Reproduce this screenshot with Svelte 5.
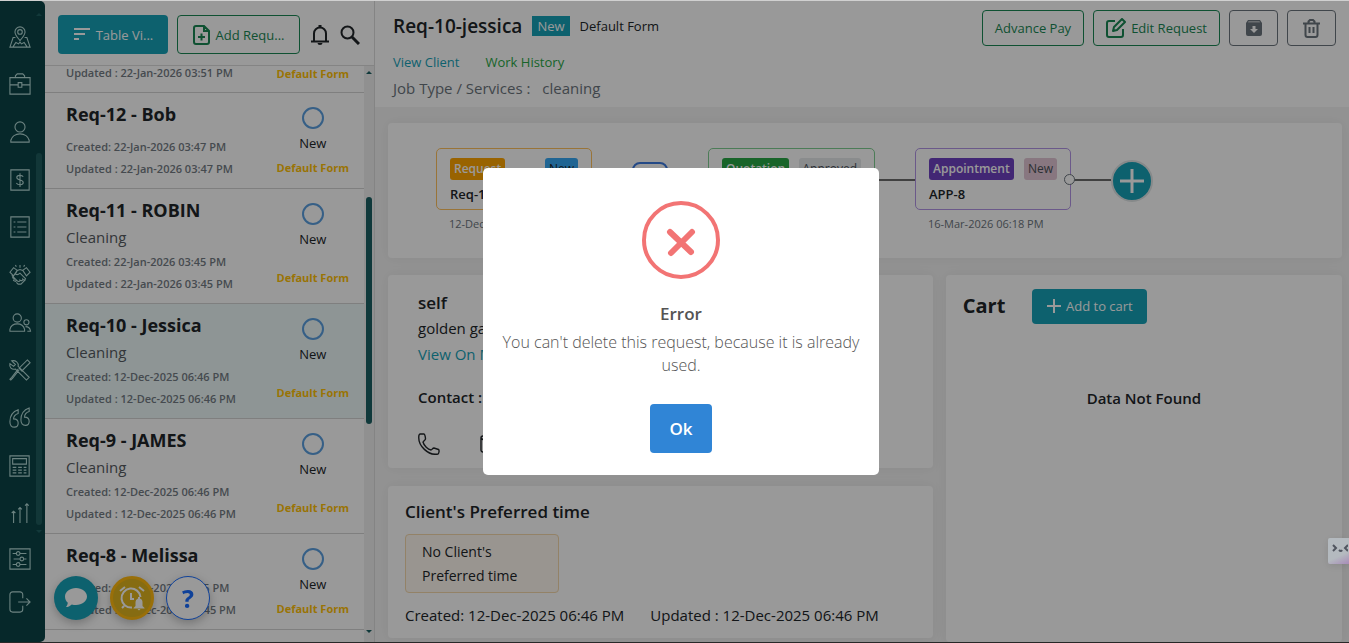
<script>
    let showError = true;

    // 24x24 outline icons for the side menu
    const menu = [
        { label: 'Map', d: 'M12 16C9 12 6.500 9.500 6.500 6.500a5.500 5.500 0 0 1 11 0C17.500 9.500 15 12 12 16zM12 9a2.500 2.500 0 1 0 0-5 2.500 2.500 0 0 0 0 5zM7 12.500H4.500L1 23h22l-3.500-10.500H17M4.500 22.500l3-4.500 3 1.500 1.500-2 1.500 2 3-1.500 3 4.500' },
        { label: 'Jobs', d: 'M1 5h22v18H1zM7 5V3l2-2h6l2 2v2M1 13h9M14 13h9M10 10.500h4v5h-4z' },
        { label: 'Clients', d: 'M12 12a5.500 5.500 0 1 0 0-11 5.500 5.500 0 0 0 0 11zM2 23v-2c1-4 5-7 10-7s9 3 10 7v2z' },
        { label: 'Payments', d: 'M2 1h20v22H2zM15.500 8.500c-1-2-7-2.500-7 .8 0 3.700 7 1.700 7 5.500 0 3.200-6 3-7.500.4M12 4.500v15' },
        { label: 'Requests', d: 'M2 1h20v22H2zM5 6.500h2M9 6.500h10M5 12h2M9 12h10M5 17.500h2M9 17.500h10' },
        { label: 'Deals', d: 'M1 9l4-5 4 3-4 6zM23 9l-4-5-4 3 4 6zM9 7l3-1 3 1M9 7l-2 4c2 1.500 4 0 5-1l6 6c-1 2-2 1.500-3 .5 0 2-2 2-3 1 0 2-2 2-3 1l-6-6M5 13l-1 2 2 1-1 2 2 1 1-1M8 20l2 2h3l5-5M12 4V1M8 3L7 1M16 3l1-2' },
        { label: 'Team', d: 'M9 11a4.500 4.500 0 1 0 0-9 4.500 4.500 0 0 0 0 9zM1 21v-2c1-4 4-6 8-6s7 2 8 6v2zM19 14a2.800 2.800 0 1 0 0-5.600 2.800 2.800 0 0 0 0 5.600zM18 16c3 0 5 1.500 5.500 5H20' },
        { label: 'Services', d: 'M20 1l3 3-9 9-3-3zM11 12L4 21l-2 2-1-1 2-2 7-9M3 2l4 4-2 2-4-3c-1 4 2 7 6 6l12 12 3-3L10 8c1-4-3-7-7-6z' },
        { label: 'Quotes', d: 'M10 3C4 5 1 9 1 16c0 4 2 6 5 6s4-2 4-4.500S8 13 5 13c0-3 2-5 5-6zM22 1c-6 2-9 6-9 13 0 4 2 6 5 6s4-2 4-4.500S20 11 17 11c0-3 2-5 5-6z' },
        { label: 'Invoices', d: 'M1 1h21v22H1zM4 4h15v6H4zM4 13.500h4M10 13.500h4M16 13.500h3M4 16.500h4M10 16.500h4M16 16.500h3M4 19.500h4M10 19.500h4M16 19.500h3' },
        { label: 'Reports', d: 'M5 23V10M3 12l2-2 2 2M12 23V6M10 8l2-2 2 2M19.500 23V2M17.500 4l2-2 2 2' }
    ];
    const bottomMenu = [
        { label: 'Settings', d: 'M1 1h22v22H1zM4 6h4M12 6h7M10 8a2 2 0 1 0 0-4 2 2 0 0 0 0 4zM5 12h7M16 12h3M14 14a2 2 0 1 0 0-4 2 2 0 0 0 0 4zM4 18h4M12 18h7M10 20a2 2 0 1 0 0-4 2 2 0 0 0 0 4z' },
        { label: 'Log out', d: 'M15 8V4a3 3 0 0 0-3-3H4a3 3 0 0 0-3 3v16a3 3 0 0 0 3 3h8a3 3 0 0 0 3-3v-4M10 12h13M19 8l4 4-4 4' }
    ];

    const requests = [
        { title: 'Req-12 - Bob', service: '', created: '22-Jan-2026 03:47 PM', updated: '22-Jan-2026 03:47 PM' },
        { title: 'Req-11 - ROBIN', service: 'Cleaning', created: '22-Jan-2026 03:45 PM', updated: '22-Jan-2026 03:45 PM' },
        { title: 'Req-10 - Jessica', service: 'Cleaning', created: '12-Dec-2025 06:46 PM', updated: '12-Dec-2025 06:46 PM', active: true },
        { title: 'Req-9 - JAMES', service: 'Cleaning', created: '12-Dec-2025 06:46 PM', updated: '12-Dec-2025 06:46 PM' },
        { title: 'Req-8 - Melissa', service: '', created: '12-Dec-2025 06:45 PM', updated: '12-Dec-2025 06:45 PM' }
    ];
</script>

<div class="app">
    <nav class="sidebar">
        <div class="menu-scroll">
            <div class="menu">
                {#each menu as item}
                    <a href="#menu" aria-label={item.label}><svg viewBox="0 0 24 24"><path d={item.d} /></svg></a>
                {/each}
            </div>
            <div class="menu-bar">
                <i class="tri up"></i>
                <i class="menu-thumb"></i>
                <i class="tri down"></i>
            </div>
        </div>
        <div class="menu bottom">
            {#each bottomMenu as item}
                <a href="#menu" aria-label={item.label}><svg viewBox="0 0 24 24"><path d={item.d} /></svg></a>
            {/each}
        </div>
    </nav>

    <aside class="panel">
        <div class="tools">
            <button class="btn teal table-view">
                <svg width="18" height="18" viewBox="0 0 18 18"><path d="M1 3h16M1 8h11M1 13h5" stroke="currentColor" stroke-width="2" /></svg>
                <span>Table Vi...</span>
            </button>
            <button class="btn green add-request">
                <svg width="18" height="20" viewBox="0 0 18 20" fill="none" stroke="currentColor" stroke-width="2"><path d="M3 1h8l5 5v11a2 2 0 0 1-2 2H3a2 2 0 0 1-2-2V3a2 2 0 0 1 2-2zM11 1v5h5M8.500 8.500v7M5 12h7" /></svg>
                <span>Add Requ...</span>
            </button>
            <div class="tool-icons">
                <button class="plain" aria-label="Notifications">
                    <svg width="20" height="22" viewBox="0 0 20 22"><path d="M4 17V9.500a6 6 0 0 1 12 0V17M1 17.500h18" fill="none" stroke="currentColor" stroke-width="2" /><path d="M8.500 1h3v3h-3zM7.500 19h5a2.500 2 0 0 1-5 0z" fill="currentColor" /></svg>
                </button>
                <button class="plain" aria-label="Search">
                    <svg width="20" height="20" viewBox="0 0 20 20" fill="none" stroke="currentColor"><circle cx="7.500" cy="7.500" r="6" stroke-width="2" /><path d="M12 12l7 7" stroke-width="3" /></svg>
                </button>
            </div>
        </div>

        <div class="list-wrap">
            <div class="list">
                <div class="row cut">
                    <p class="date">Updated : 22-Jan-2026 03:51 PM</p>
                    <span class="form">Default Form</span>
                </div>
                {#each requests as r}
                    <div class="row" class:active={r.active} class:short={!r.service}>
                        <div class="info">
                            <h2>{r.title}</h2>
                            {#if r.service}<p class="service">{r.service}</p>{/if}
                            <div class="dates">
                                <p class="date">Created: {r.created}</p>
                                <p class="date">Updated : {r.updated}</p>
                            </div>
                        </div>
                        <div class="state">
                            <i class="ring"></i>
                            <span class="status">New</span>
                            <span class="form">Default Form</span>
                        </div>
                    </div>
                {/each}
            </div>
            <div class="list-bar">
                <i class="tri up"></i>
                <i class="list-thumb"></i>
                <i class="tri down"></i>
            </div>
        </div>
    </aside>

    <main>
        <header>
            <div class="heading">
                <div class="title-line">
                    <h1>Req-10-jessica</h1>
                    <span class="badge-new">New</span>
                    <span class="small-text">Default Form</span>
                </div>
                <div class="links">
                    <a class="link-teal" href="#client">View Client</a>
                    <a class="link-green" href="#history">Work History</a>
                </div>
                <p class="job">Job Type / Services : <span>cleaning</span></p>
            </div>
            <div class="actions">
                <button class="btn green">Advance Pay</button>
                <button class="btn green">
                    <svg width="20" height="20" viewBox="0 0 20 20" fill="none" stroke="currentColor" stroke-width="2"><path d="M9 3H3a2 2 0 0 0-2 2v12a2 2 0 0 0 2 2h12a2 2 0 0 0 2-2v-6M7 13l1-4 8-8 3 3-8 8z" stroke-linejoin="round" /></svg>
                    <span>Edit Request</span>
                </button>
                <button class="btn gray" aria-label="Archive">
                    <svg width="16" height="16" viewBox="0 0 16 16"><path fill="currentColor" fill-rule="evenodd" d="M2 0h12l2 3v11a2 2 0 0 1-2 2H2a2 2 0 0 1-2-2V3zM2.500 1.500h11l.5.8H2zM6.500 6v3H4l4 4 4-4H9.500V6z" /></svg>
                </button>
                <button class="btn gray" aria-label="Delete">
                    <svg width="17" height="19" viewBox="0 0 17 19" fill="none" stroke="currentColor" stroke-width="2"><path d="M0 4.500h17M2.500 4.500V16a2 2 0 0 0 2 2h8a2 2 0 0 0 2-2V4.500M5.500 4V2.500L7 1h3l1.500 1.500V4M6.500 8v6M10.500 8v6" /></svg>
                </button>
            </div>
        </header>

        <div class="content">
            <section class="card flow">
                <div class="step">
                    <div class="node request">
                        <div class="tags"><b>Request</b><span>New</span></div>
                        <strong>Req-10</strong>
                        <i class="port"></i>
                    </div>
                    <p>12-Dec-2025 06:46 PM</p>
                </div>
                <i class="line"></i>
                <i class="blue-box"></i>
                <i class="line"></i>
                <div class="step wide">
                    <div class="node quotation">
                        <div class="tags"><b>Quotation</b><span>Approved</span></div>
                        <i class="port"></i>
                    </div>
                </div>
                <i class="line"></i>
                <div class="step">
                    <div class="node appointment">
                        <div class="tags"><b>Appointment</b><span>New</span></div>
                        <strong>APP-8</strong>
                        <i class="port"></i>
                    </div>
                    <p>16-Mar-2026 06:18 PM</p>
                </div>
                <i class="line"></i>
                <button class="plus" aria-label="Add step">
                    <svg width="24" height="24" viewBox="0 0 24 24"><path d="M12 0v24M0 12h24" stroke="currentColor" stroke-width="3" /></svg>
                </button>
            </section>

            <div class="columns">
                <div class="left">
                    <section class="card contact">
                        <h3>self</h3>
                        <p>golden gate</p>
                        <a class="link-teal" href="#map">View On Map</a>
                        <h4>Contact :</h4>
                        <div class="contact-icons">
                            <svg width="22" height="22" viewBox="0 0 22 22"><path d="M2 1h4c1 0 1.500 4 1.500 5S5 8.500 5 9c1 4 5 7.500 8 8 1 0 1.500-2 3-2l4.500 1.500c1 .5.500 4-.5 4.500C11 23-1 13 1 2z" /></svg>
                            <svg width="22" height="22" viewBox="0 0 22 22"><path d="M3 3h16a2 2 0 0 1 2 2v12a2 2 0 0 1-2 2H3a2 2 0 0 1-2-2V5a2 2 0 0 1 2-2zM1 5l10 8L21 5" /></svg>
                        </div>
                    </section>
                    <section class="card time">
                        <h3>Client's Preferred time</h3>
                        <div class="notice">No Client's Preferred time</div>
                        <div class="stamps">
                            <span>Created: 12-Dec-2025 06:46 PM</span>
                            <span>Updated : 12-Dec-2025 06:46 PM</span>
                        </div>
                    </section>
                </div>
                <section class="card cart">
                    <div class="cart-head">
                        <h2>Cart</h2>
                        <button class="btn teal add-cart">
                            <svg width="14" height="14" viewBox="0 0 14 14"><path d="M7 0v14M0 7h14" stroke="currentColor" stroke-width="2" /></svg>
                            <span>Add to cart</span>
                        </button>
                    </div>
                    <p>Data Not Found</p>
                </section>
            </div>
        </div>
    </main>
</div>

<div class="floating">
    <button class="fab chat" aria-label="Chat">
        <svg width="24" height="22" viewBox="0 0 24 22"><path fill="#fff" d="M12 1c6 0 11 3.700 11 8.500S18 18 12 18c-1.500 0-3-.2-4.200-.6C6 19 4 20 2 20c1-1.200 1.700-2.700 1.800-4.200C2 14.200 1 12 1 9.500 1 4.700 6 1 12 1z" /></svg>
    </button>
    <button class="fab alarm" aria-label="Reminders">
        <svg width="26" height="26" viewBox="0 0 26 26" fill="none" stroke="#fff" stroke-width="2"><path d="M13 22.500A9.500 9.500 0 1 1 21.500 12M12 8v6h3M1 6l5-4M25 6l-5-4M3 23l2-2" /><path fill="#fff" stroke="none" d="M19 12h2v1.500c2 .7 2.500 2 2.500 4V21l2 2v.6h-11V23l2-2v-3.500c0-2 .8-3.300 2.500-4zM18.500 24h3l-1.500 1.500z" /></svg>
    </button>
    <button class="fab help" aria-label="Help">?</button>
</div>

{#if showError}
    <div class="backdrop">
        <div class="modal" role="alertdialog" aria-labelledby="error-title">
            <svg class="error-icon" width="78" height="78" viewBox="0 0 78 78"><circle cx="39" cy="39" r="37" /><path d="M28 31l21 20M50 31L29 52" /></svg>
            <h2 id="error-title">Error</h2>
            <p>You can't delete this request, because it is already used.</p>
            <button on:click={() => (showError = false)}>Ok</button>
        </div>
    </div>
{/if}

<button class="helper" aria-label="Assistant">
    <svg width="20" height="12" viewBox="0 0 20 12" fill="none" stroke="#50555f" stroke-width="2"><path d="M5 3l3 3-3 3M11 8q2 2 3 0M20 3l-3 3 3 3" /></svg>
</button>

<style>
    :global(body) {
        background: #f4f4f4;
        font-family: 'Open Sans', 'Noto Sans', sans-serif;
        color: #212529;
        overflow: hidden;
    }

    .app, .app *, .backdrop *, .floating *, .helper {
        box-sizing: border-box;
    }

    h1, h2, h3, h4, p {
        margin: 0;
    }

    button {
        font-family: inherit;
        padding: 0;
        cursor: pointer;
    }

    a {
        text-decoration: none;
    }

    svg {
        flex: none;
        display: block;
    }

    .app {
        display: flex;
        height: 100vh;
        background: #fff;
        border-top: 1px solid #d0d0d0;
        border-bottom: 1px solid #444;
    }

    /* side menu */
    .sidebar {
        width: 45px;
        flex: none;
        display: flex;
        flex-direction: column;
        background: #0a4346;
        border-radius: 0 5px 5px 0;
    }

    .menu-scroll {
        display: flex;
        height: 536px;
        padding-top: 12px;
    }

    .menu {
        width: 36px;
        display: flex;
        flex-direction: column;
    }

    .menu a {
        flex: 1;
        display: flex;
        align-items: center;
        justify-content: flex-end;
        padding-right: 5px;
    }

    .menu.bottom a {
        flex: none;
        height: 43px;
    }

    .menu svg {
        width: 22px;
        height: 22px;
        fill: none;
        stroke: #b5dad7;
        stroke-width: 1.2;
        overflow: visible;
    }

    .menu-bar, .list-bar {
        display: flex;
        flex-direction: column;
        align-items: center;
    }

    .menu-bar {
        width: 6px;
        padding-bottom: 4px;
        color: #1f6062;
    }

    .menu-thumb {
        flex: 1;
        width: 6px;
        margin: 137px 0 5px;
        border-radius: 3px;
        background: #1f5c5e;
    }

    .tri {
        border: 3px solid transparent;
    }

    .tri.up {
        border-top: 0;
        border-bottom-color: currentColor;
    }

    .tri.down {
        border-bottom: 0;
        border-top-color: currentColor;
    }

    /* request list */
    .panel {
        width: 330px;
        flex: none;
        display: flex;
        flex-direction: column;
        border-right: 1px solid #ddd;
    }

    .tools {
        height: 65px;
        flex: none;
        display: flex;
        align-items: center;
        gap: 9px;
        padding: 3px 13px 0;
        border-bottom: 1px solid #ddd;
    }

    .tool-icons {
        flex: 1;
        display: flex;
        align-items: center;
        justify-content: center;
        gap: 10px;
    }

    .btn {
        display: flex;
        align-items: center;
        justify-content: center;
        gap: 5px;
        border-radius: 4px;
        font-size: 13px;
        white-space: nowrap;
    }

    .teal {
        border: 0;
        background: #17a2b8;
        color: #fff;
    }

    .green {
        border: 1px solid #198754;
        background: #fff;
        color: #198754;
    }

    .gray {
        border: 1px solid #6c757d;
        background: #fff;
        color: #6c757d;
    }

    .table-view {
        width: 110px;
        height: 39px;
    }

    .add-request {
        width: 123px;
        height: 39px;
    }

    .plain {
        border: 0;
        background: none;
        color: #212529;
        width: 20px;
    }

    .list-wrap {
        flex: 1;
        min-height: 0;
        display: flex;
    }

    .list {
        flex: 1;
        overflow: hidden;
    }

    .row {
        display: flex;
        justify-content: space-between;
        padding: 8px 15px 8px 21px;
        border-bottom: 1px solid #d4d4d4;
    }

    .row.active {
        background: #edf9f9;
    }

    .row.cut {
        padding-top: 0;
        height: 27px;
        align-items: flex-end;
    }

    .row h2 {
        font-size: 18px;
        line-height: 27px;
        font-weight: 700;
    }

    .service {
        font-size: 15px;
        line-height: 26px;
        color: #555b61;
    }

    .dates {
        padding-top: 1px;
    }

    .short .dates {
        padding-top: 8px;
    }

    .date {
        font-size: 11px;
        line-height: 22px;
        font-weight: 600;
        color: #747c84;
        white-space: nowrap;
    }

    .state {
        display: flex;
        flex-direction: column;
        align-items: center;
        padding-top: 6px;
    }

    .ring {
        width: 22px;
        height: 22px;
        border: 2px solid #5b9fe0;
        border-radius: 50%;
    }

    .status {
        margin-top: 4px;
        font-size: 13px;
        line-height: 20px;
    }

    .form {
        font-size: 11px;
        line-height: 20px;
        font-weight: 700;
        color: #ffc107;
    }

    .state .form {
        margin-top: 19px;
    }

    .short .state .form {
        margin-top: 5px;
    }

    .list-bar {
        width: 10px;
        padding: 5px 0 9px;
        background: #f1f1f1;
        color: #1b6063;
    }

    .list-thumb {
        width: 6px;
        height: 227px;
        margin: 123px 0 auto;
        border-radius: 3px;
        background: #1b6063;
    }

    /* request details */
    main {
        flex: 1;
        min-width: 0;
        display: flex;
        flex-direction: column;
        background: #f4f4f4;
    }

    header {
        height: 106px;
        flex: none;
        display: flex;
        justify-content: space-between;
        padding: 9px 13px 0 18px;
        background: #fff;
    }

    .title-line {
        display: flex;
        align-items: center;
        gap: 10px;
        height: 32px;
    }

    h1 {
        font-size: 19px;
        font-weight: 600;
    }

    .badge-new {
        height: 20px;
        padding: 0 5px;
        background: #17a2b8;
        color: #fff;
        font-size: 13px;
        line-height: 20px;
    }

    .small-text {
        font-size: 13px;
    }

    .links {
        display: flex;
        gap: 26px;
        margin-top: 10px;
        font-size: 13px;
        line-height: 20px;
    }

    .link-teal {
        color: #17a2b8;
    }

    .link-green {
        color: #28a745;
    }

    .job {
        margin-top: 4px;
        font-size: 15px;
        line-height: 24px;
        color: #6c757d;
    }

    .job span {
        margin-left: 8px;
    }

    .actions {
        display: flex;
        align-items: flex-start;
        gap: 9px;
    }

    .actions .btn {
        height: 36px;
        padding: 0 12px;
    }

    .actions .gray {
        width: 49px;
    }

    .content {
        flex: 1;
        min-height: 0;
        display: flex;
        flex-direction: column;
        gap: 17px;
        padding: 16px 7px 0 13px;
    }

    .card {
        background: #fff;
        border-radius: 4px;
        box-shadow: 0 0 14px rgba(0, 0, 0, 0.05);
    }

    .flow {
        height: 135px;
        flex: none;
        display: flex;
        align-items: flex-start;
        padding: 25px 48px;
    }

    .step {
        width: 156px;
        flex: none;
    }

    .step.wide {
        width: 167px;
    }

    .step p {
        padding-left: 13px;
        font-size: 11px;
        line-height: 28px;
        color: #6c757d;
    }

    .node {
        position: relative;
        height: 62px;
        padding: 9px 13px 0;
        border: 1px solid;
        border-radius: 5px;
    }

    .tags {
        display: flex;
        justify-content: space-between;
        font-size: 12px;
        line-height: 22px;
    }

    .tags b, .tags span {
        padding: 0 4px;
        border-radius: 3px;
    }

    .tags b {
        color: #fff;
        font-weight: 600;
    }

    .node strong {
        display: block;
        font-size: 13px;
        line-height: 28px;
        font-weight: 600;
    }

    .request {
        border-color: #ffc15e;
    }

    .request b {
        background: #ffa500;
    }

    .request span {
        background: #36a9f5;
    }

    .quotation {
        border-color: #7fcf92;
    }

    .quotation b {
        background: #28a745;
    }

    .quotation span {
        background: #e6e9ec;
        color: #495057;
    }

    .appointment {
        border-color: #b295e6;
    }

    .appointment b {
        background: #6f42c1;
    }

    .appointment span {
        background: #e3c7d5;
        color: #495057;
    }

    .port {
        position: absolute;
        right: -5px;
        top: 25px;
        width: 11px;
        height: 11px;
        border: 1px solid #6c757d;
        border-radius: 50%;
        background: #fff;
    }

    .line {
        width: 40px;
        height: 2px;
        flex: none;
        margin-top: 31px;
        background: #6c6c6c;
    }

    .blue-box {
        width: 36px;
        height: 36px;
        margin-top: 14px;
        border: 2px solid #3d7be0;
        border-radius: 8px;
    }

    .plus {
        display: flex;
        align-items: center;
        justify-content: center;
        width: 42px;
        height: 42px;
        margin-top: 12px;
        border: 2px solid #dfe5e6;
        border-radius: 50%;
        background: #17a2b8;
        color: #fff;
    }

    .columns {
        flex: 1;
        min-height: 0;
        display: grid;
        grid-template-columns: 11fr 8fr;
        gap: 13px;
    }

    .left {
        display: flex;
        flex-direction: column;
        gap: 18px;
        padding-bottom: 4px;
    }

    .contact {
        display: flex;
        flex-direction: column;
        align-items: flex-start;
        height: 193px;
        padding: 16px 30px 0;
        font-size: 15px;
        line-height: 24px;
    }

    .contact h3 {
        font-size: 17px;
        font-weight: 600;
    }

    .contact p, .contact .link-teal {
        line-height: 26px;
    }

    .contact h4 {
        margin-top: 18px;
        font-size: 15px;
        font-weight: 600;
    }

    .contact-icons {
        display: flex;
        gap: 40px;
        margin-top: 24px;
    }

    .contact-icons svg {
        fill: none;
        stroke: #212529;
        stroke-width: 1.4;
    }

    .time {
        flex: 1;
        padding: 14px 17px 0;
    }

    .time h3 {
        font-size: 17px;
        line-height: 24px;
        font-weight: 600;
    }

    .notice {
        width: 154px;
        margin-top: 10px;
        padding: 5px 16px 4px;
        border: 1px solid #f5d9ac;
        border-radius: 4px;
        background: #fff8f0;
        font-size: 14px;
        line-height: 24px;
    }

    .stamps {
        display: flex;
        gap: 26px;
        margin-top: 10px;
        font-size: 15px;
        line-height: 24px;
    }

    .cart {
        padding: 13px 17px;
    }

    .cart-head {
        display: flex;
        align-items: center;
        gap: 27px;
    }

    .cart h2 {
        font-size: 20px;
        line-height: 36px;
        font-weight: 700;
    }

    .add-cart {
        width: 115px;
        height: 35px;
    }

    .cart p {
        margin-top: 62px;
        text-align: center;
        font-size: 15px;
        line-height: 24px;
        font-weight: 600;
    }

    /* overlays */
    .floating {
        position: fixed;
        left: 54px;
        bottom: 23px;
        display: flex;
        gap: 12px;
    }

    .fab {
        display: flex;
        align-items: center;
        justify-content: center;
        width: 44px;
        height: 44px;
        border: 0;
        border-radius: 50%;
        box-shadow: 0 3px 10px rgba(0, 0, 0, 0.25);
    }

    .chat {
        background: #17a2b8;
    }

    .alarm {
        border: 3px solid #ffb90f;
        background: #e0b51e;
    }

    .help {
        border: 1px solid #1a6dff;
        background: #fff;
        color: #1a6dff;
        font-size: 25px;
        line-height: 25px;
        font-weight: 700;
    }

    .backdrop {
        position: fixed;
        inset: 1px 0 0;
        display: flex;
        align-items: center;
        justify-content: center;
        padding: 0 0 1px 13px;
        background: rgba(0, 0, 0, 0.4);
    }

    .modal {
        display: flex;
        flex-direction: column;
        align-items: center;
        width: 396px;
        padding: 33px 16px 22px;
        border-radius: 5px;
        background: #fff;
        color: #545454;
        text-align: center;
    }

    .error-icon {
        fill: none;
        stroke: #f27474;
    }

    .error-icon circle {
        stroke-width: 4;
    }

    .error-icon path {
        stroke-width: 6;
        stroke-linecap: round;
    }

    .modal h2 {
        margin-top: 23px;
        font-size: 17px;
        line-height: 24px;
        font-weight: 600;
    }

    .modal p {
        margin-top: 5px;
        font-size: 16px;
        line-height: 23px;
        font-weight: 300;
    }

    .modal button {
        width: 62px;
        height: 49px;
        margin-top: 27px;
        border: 0;
        border-radius: 4px;
        background: #3085d6;
        color: #fff;
        font-size: 17px;
        font-weight: 600;
    }

    .helper {
        position: fixed;
        right: 0;
        top: 538px;
        width: 21px;
        height: 26px;
        padding: 3px 0 9px;
        border: 0;
        border-radius: 2px 0 0 2px;
        background: linear-gradient(155deg, #b4babf 65%, #a78bb8);
        box-shadow: 0 2px 8px rgba(0, 0, 0, 0.1);
    }
</style>
